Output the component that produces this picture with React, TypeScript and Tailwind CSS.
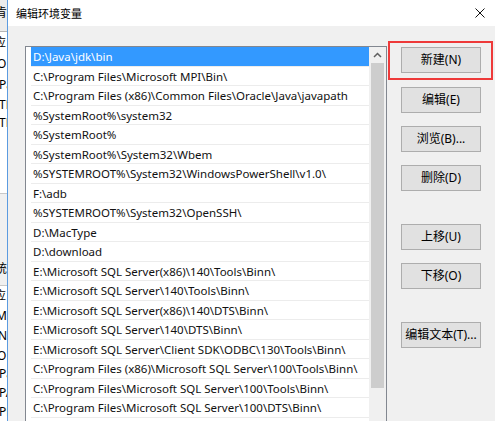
import React from "react";

const paths: string[] = [
  "D:\\Java\\jdk\\bin",
  "C:\\Program Files\\Microsoft MPI\\Bin\\",
  "C:\\Program Files (x86)\\Common Files\\Oracle\\Java\\javapath",
  "%SystemRoot%\\system32",
  "%SystemRoot%",
  "%SystemRoot%\\System32\\Wbem",
  "%SYSTEMROOT%\\System32\\WindowsPowerShell\\v1.0\\",
  "F:\\adb",
  "%SYSTEMROOT%\\System32\\OpenSSH\\",
  "D:\\MacType",
  "D:\\download",
  "E:\\Microsoft SQL Server(x86)\\140\\Tools\\Binn\\",
  "E:\\Microsoft SQL Server\\140\\Tools\\Binn\\",
  "E:\\Microsoft SQL Server(x86)\\140\\DTS\\Binn\\",
  "E:\\Microsoft SQL Server\\140\\DTS\\Binn\\",
  "E:\\Microsoft SQL Server\\Client SDK\\ODBC\\130\\Tools\\Binn\\",
  "C:\\Program Files (x86)\\Microsoft SQL Server\\100\\Tools\\Binn\\",
  "C:\\Program Files\\Microsoft SQL Server\\100\\Tools\\Binn\\",
  "C:\\Program Files\\Microsoft SQL Server\\100\\DTS\\Binn\\",
  "",
];

function Btn({ label, className = "" }: { label: string; className?: string }) {
  return (
    <div
      className={
        "flex h-[26px] w-[80px] shrink-0 items-center justify-center border border-[#adadad] bg-[#e1e1e1] text-[12px] leading-none text-black " +
        className
      }
    >
      {label}
    </div>
  );
}

function Frag({ t, h, ml }: { t: string; h: string; ml: string }) {
  return (
    <div className={"flex shrink-0 items-center whitespace-nowrap " + h}>
      <span className={ml}>{t}</span>
    </div>
  );
}

export default function App() {
  return (
    <div className="relative flex h-[421px] w-[495px] overflow-hidden bg-[#f0f0f0] font-['Noto_Sans','Noto_Sans_CJK_SC',sans-serif] text-black">
      {/* background window fragment */}
      <div className="flex w-[7px] shrink-0 flex-col overflow-hidden text-[12px] leading-none text-black">
        <div className="flex h-[31px] shrink-0 flex-col bg-[#ececec]">
          <Frag t="肯" h="h-[26px]" ml="ml-[-5px]" />
        </div>
        <div className="h-px shrink-0 bg-[#b5b5b5]" />
        <div className="flex h-[161px] shrink-0 flex-col bg-white">
          <Frag t="应" h="h-[22px]" ml="ml-[-6px]" />
          <Frag t="O" h="h-[19px]" ml="ml-[-3px]" />
          <Frag t="Pa" h="h-[23px]" ml="ml-[-1px]" />
          <Frag t="TE" h="h-[17px]" ml="ml-[-1px]" />
          <Frag t="TM" h="h-[20px]" ml="ml-[-1px]" />
        </div>
        <div className="h-px shrink-0 bg-[#c8c8c8]" />
        <div className="flex h-[91px] shrink-0 flex-col justify-end bg-[#f0f0f0] pb-[8px]">
          <Frag t="统" h="h-[16px]" ml="ml-[-5px]" />
        </div>
        <div className="h-px shrink-0 bg-[#c8c8c8]" />
        <div className="flex flex-1 flex-col bg-white">
          <Frag t="应" h="h-[19px]" ml="ml-[-6px]" />
          <Frag t="M" h="h-[21px]" ml="ml-[-4px]" />
          <Frag t="N" h="h-[20px]" ml="ml-[-2px]" />
          <Frag t="O" h="h-[19px]" ml="ml-[-3px]" />
          <Frag t="Pa" h="h-[18px]" ml="ml-[-1px]" />
          <Frag t="PA" h="h-[19px]" ml="ml-[-1px]" />
          <Frag t="PF" h="h-[20px]" ml="ml-[-1px]" />
        </div>
      </div>
      {/* dialog border */}
      <div className="w-px shrink-0 bg-[#5b9be0]" />
      {/* dialog */}
      <div className="flex min-w-0 flex-1 flex-col">
        <div className="flex h-[26px] shrink-0 items-center justify-between bg-white pl-[8px] pr-[10px]">
          <span className="text-[11px] leading-none">编辑环境变量</span>
          <svg width="10" height="10" viewBox="0 0 10 10">
            <path d="M0.5 0.5L9.5 9.5M9.5 0.5L0.5 9.5" stroke="#111" strokeWidth="1" fill="none" />
          </svg>
        </div>
        <div className="flex flex-1 pl-[17px] pt-[20px]">
          {/* list box */}
          <div className="flex h-[420px] w-[362px] shrink-0 border border-[#828790] bg-white">
            <div className="flex min-w-0 flex-1 flex-col overflow-hidden pl-[5px]">
              {paths.map((p, i) => (
                <div
                  key={i}
                  className={
                    "flex h-[19.5px] shrink-0 items-center whitespace-nowrap border-b border-[#ececec] pl-[2px] pt-[1px] text-[11.5px] leading-none " +
                    (i === 0 ? "bg-[#3399ff] text-white" : "text-[#111]")
                  }
                >
                  {p}
                </div>
              ))}
            </div>
            <div className="flex w-[17px] shrink-0 flex-col items-center bg-[#f0f0f0]">
              <div className="flex h-[16px] w-full shrink-0 items-center justify-center">
                <svg width="9" height="6" viewBox="0 0 9 6">
                  <path d="M1 5L4.5 1.5L8 5" stroke="#606060" strokeWidth="1.5" fill="none" />
                </svg>
              </div>
              <div className="h-[325px] w-[13px] shrink-0 bg-[#cdcdcd]" />
            </div>
          </div>
          {/* buttons */}
          <div className="ml-[14px] flex w-[80px] flex-col pt-[1px]">
            <Btn label="新建(N)" />
            <Btn label="编辑(E)" className="mt-[14px]" />
            <Btn label="浏览(B)..." className="mt-[13px]" />
            <Btn label="删除(D)" className="mt-[13px]" />
            <Btn label="上移(U)" className="mt-[33px]" />
            <Btn label="下移(O)" className="mt-[13px]" />
            <Btn label="编辑文本(T)..." className="mt-[33px]" />
          </div>
        </div>
      </div>
      {/* red highlight annotation */}
      <div className="pointer-events-none absolute left-[388px] top-[41px] h-[39px] w-[105px] border-2 border-[#ee3a3a]" />
    </div>
  );
}
